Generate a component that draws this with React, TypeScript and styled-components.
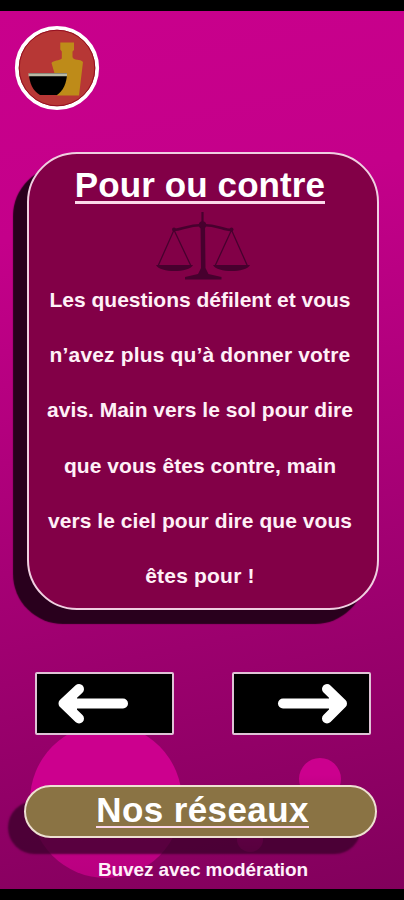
import React from "react";
import styled, { createGlobalStyle } from "styled-components";

const Global = createGlobalStyle`
  * { box-sizing: border-box; }
  html, body { margin: 0; background: #000; }
  body { font-family: "Liberation Sans", Arial, sans-serif; font-weight: 700; color: #fff; }
`;

const Screen = styled.main`
  position: relative;
  width: 404px;
  height: 900px;
  display: flex;
  flex-direction: column;
  align-items: center;
  overflow: hidden;
  border-top: 11px solid #000;
  border-bottom: 11px solid #000;
  background: linear-gradient(168deg, #c9008c 0%, #c4008a 24%, #9c006e 70%, #82005c 100%);
`;

const Bubble = styled.span<{ $x: number; $y: number; $w: number; $h: number }>`
  position: absolute;
  left: ${(p) => p.$x}px;
  top: ${(p) => p.$y}px;
  width: ${(p) => p.$w}px;
  height: ${(p) => p.$h}px;
  border-radius: 50%;
  background: linear-gradient(#cc008e 40%, #b8007f);
`;

const Logo = styled.svg`
  align-self: flex-start;
  flex: none;
  display: block;
  width: 86px;
  height: 86px;
  margin: 14px 0 0 14px;
`;

const Card = styled.section`
  position: relative;
  flex: none;
  display: flex;
  flex-direction: column;
  align-items: center;
  width: 352px;
  height: 458px;
  margin: 41px 0 0 2px;
  border: 2px solid #f0cfe1;
  border-radius: 50px;
  background: #820047;
  box-shadow: -14px 14px 1px #29001d;
`;

const Title = styled.h1<{ $spacing: number }>`
  margin: 0;
  font-size: 35px;
  line-height: 40px;
  letter-spacing: ${(p) => p.$spacing}px;
  white-space: nowrap;
`;

const Underlined = styled.span<{ $weight: number }>`
  display: block;
  height: ${(p) => 36 + p.$weight}px;
  border-bottom: ${(p) => p.$weight}px solid #fbd9ea;
`;

const CardTitle = styled(Title)`
  margin: 11px 6px 0 0;
`;

const Scales = styled.svg`
  display: block;
  width: 94px;
  height: 70px;
  margin-top: 8px;
`;

const Description = styled.p`
  margin: -10px 6px 0 0;
  font-size: 21px;
  line-height: 55.2px;
  text-align: center;
  white-space: nowrap;
  color: #fff0f7;
`;

const Line = styled.span<{ $spacing: number }>`
  display: block;
  letter-spacing: ${(p) => p.$spacing}px;
`;

const Controls = styled.nav`
  position: relative;
  flex: none;
  display: flex;
  gap: 58px;
  margin: 62px 0 0 2px;
`;

const ArrowButton = styled.button`
  width: 139px;
  height: 63px;
  padding: 0;
  border: 2px solid #dfc3d6;
  border-radius: 2px;
  background: #000;
`;

const Arrow = styled.svg`
  display: block;
  width: 135px;
  height: 59px;
`;

const Networks = styled.button`
  position: relative;
  flex: none;
  display: flex;
  justify-content: center;
  width: 353px;
  height: 53px;
  margin: 50px 4px 0 0;
  padding: 3px 0 0 5px;
  border: 2px solid #eee0d2;
  border-radius: 27px;
  background: #8a7344;
  color: #fff;
  font: inherit;
  box-shadow: -16px 16px 2px rgba(55, 0, 40, 0.75);
`;

const Notice = styled.p`
  position: relative;
  margin: 20px 0 0 2px;
  font-size: 19px;
  line-height: 24px;
  letter-spacing: -0.1px;
  white-space: nowrap;
  color: #fff0fa;
`;

const lines: { text: string; spacing: number }[] = [
  { text: "Les questions défilent et vous", spacing: 0 },
  { text: "n’avez plus qu’à donner votre", spacing: 0.15 },
  { text: "avis. Main vers le sol pour dire", spacing: 0 },
  { text: "que vous êtes contre, main", spacing: 0.05 },
  { text: "vers le ciel pour dire que vous", spacing: 0.06 },
  { text: "êtes pour !", spacing: 0.2 },
];

export default function App() {
  return (
    <>
      <Global />
      <Screen>
        <Bubble $x={30} $y={713} $w={152} $h={154} />
        <Bubble $x={299} $y={747} $w={42} $h={42} />
        <Bubble $x={237} $y={816} $w={26} $h={25} />
        <Logo viewBox="14 25 86 86" aria-label="Accueil">
          <circle cx="57" cy="68" r="40.2" fill="#b73735" stroke="#fff" strokeWidth="3.8" />
          <circle cx="57" cy="68" r="37.8" fill="none" stroke="#950e20" strokeWidth="1" />
          <path d="M60.300 42.500H74V50l-1.500 1.500V57c1 4 8 1.500 10.500 5L79 95.500H57L55 75l-3.500-12c2-3 8-2 10.300-4.500v-7l-1.500-2z" fill="#be8b19" />
          <path d="M29 73h38c0 10-4 18-10 22H40c-7-4-11-12-11-22z" fill="#000" />
          <path d="M28.500 74.700H67" stroke="#b9b9a4" strokeWidth="3" />
        </Logo>
        <Card>
          <CardTitle $spacing={0.1}><Underlined $weight={3}>Pour ou contre</Underlined></CardTitle>
          <Scales viewBox="156 212 94 70" fill="#47002e" stroke="#47002e" aria-hidden="true">
            <path d="M200.500 223h4.500l.5 45 3 6 13 3v2.500H185V277l13-3 3-6z" stroke="none" />
            <path d="M202.500 212v12" strokeWidth="2.200" />
            <circle cx="202.500" cy="225" r="3.700" stroke="none" />
            <path d="M174 230c8 0 13-5 28.500-5s20.500 5 29 5" fill="none" strokeWidth="2.600" />
            <circle cx="174" cy="229.500" r="2" stroke="none" />
            <circle cx="231.500" cy="229.500" r="2" stroke="none" />
            <path d="M174 230l-16 36M174 230l17 36M231.500 230L215 266M231.500 230L247.500 266" fill="none" strokeWidth="1.300" />
            <path d="M156 265h37c-4 8-33 8-37 0zM213 265h37c-4 8-33 8-37 0z" stroke="none" />
          </Scales>
          <Description>
            {lines.map((l) => (
              <Line key={l.text} $spacing={l.spacing}>{l.text}</Line>
            ))}
          </Description>
        </Card>
        <Controls>
          <ArrowButton aria-label="Précédent">
            <Arrow viewBox="37 674 135 59" fill="#fff" stroke="#fff" strokeLinecap="round" strokeLinejoin="round">
              <path d="M67 703.500H123" strokeWidth="10" />
              <path d="M79 689L63.500 703.500L79 718.500" fill="none" strokeWidth="10" />
              <path d="M65 703.500L77 693V714Z" stroke="none" />
            </Arrow>
          </ArrowButton>
          <ArrowButton aria-label="Suivant">
            <Arrow viewBox="234 674 135 59" fill="#fff" stroke="#fff" strokeLinecap="round" strokeLinejoin="round">
              <path d="M283 703.500H340" strokeWidth="10" />
              <path d="M327 689L342 703.500L327 718.500" fill="none" strokeWidth="10" />
              <path d="M340 703.500L329 693V714Z" stroke="none" />
            </Arrow>
          </ArrowButton>
        </Controls>
        <Networks>
          <Title as="span" $spacing={0.4}><Underlined $weight={2}>Nos réseaux</Underlined></Title>
        </Networks>
        <Notice>Buvez avec modération</Notice>
      </Screen>
    </>
  );
}
